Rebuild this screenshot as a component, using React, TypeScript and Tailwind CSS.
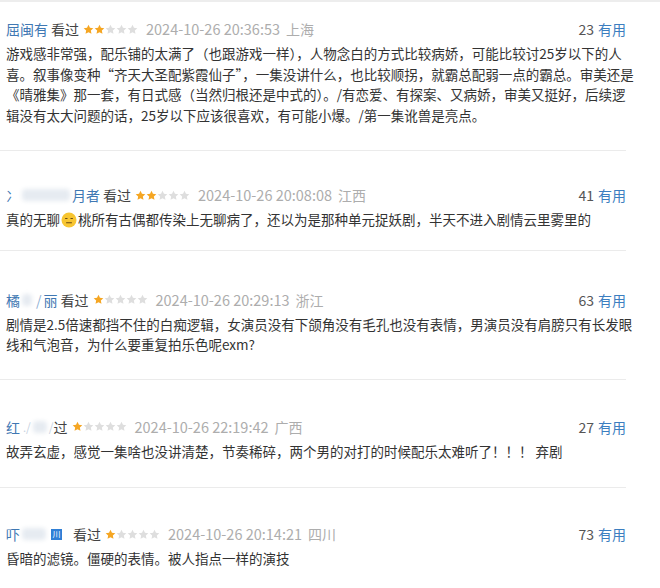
import React from "react";

type Review = {
  name: React.ReactNode;
  watchedLabel?: boolean;
  stars: number;
  date: string;
  place: string;
  votes: number;
  lines: React.ReactNode[];
  pt: string;
  pb: string;
};

const Star = ({ on }: { on: boolean }) => (
  <svg width="11" height="11" viewBox="0 0 24 24" className="shrink-0">
    <path
      d="M12 1.5l3.2 6.7 7.3.9-5.4 5 1.4 7.3L12 17.8l-6.5 3.6 1.4-7.3-5.4-5 7.3-.9z"
      fill={on ? "#f5a623" : "#dedede"}
    />
  </svg>
);

const Smudge = ({ w }: { w: number }) => (
  <span
    className="inline-block h-[12px] rounded-sm bg-[#e6ebf1] blur-[2px] mx-[2px] align-middle"
    style={{ width: w }}
  />
);

const Meh = () => (
  <svg width="16" height="16" viewBox="0 0 16 16" className="inline-block align-[-3px] mx-[1px]">
    <circle cx="8" cy="8" r="7.5" fill="#f7c531" />
    <rect x="4" y="6" width="2.6" height="1.1" rx="0.5" fill="#6b4a12" />
    <rect x="9.4" y="6" width="2.6" height="1.1" rx="0.5" fill="#6b4a12" />
    <rect x="5" y="10.2" width="6" height="1.1" rx="0.5" fill="#6b4a12" />
  </svg>
);

const reviews: Review[] = [
  {
    name: <span>屈闽有</span>,
    watchedLabel: true,
    stars: 2,
    date: "2024-10-26 20:36:53",
    place: "上海",
    votes: 23,
    pt: "pt-[17px]",
    pb: "pb-[25px]",
    lines: [
      "游戏感非常强，配乐铺的太满了（也跟游戏一样），人物念白的方式比较病娇，可能比较讨25岁以下的人",
      "喜。叙事像变种“齐天大圣配紫霞仙子”，一集没讲什么，也比较顺拐，就霸总配弱一点的霸总。审美还是",
      "《晴雅集》那一套，有日式感（当然归根还是中式的）。/有恋爱、有探案、又病娇，审美又挺好，后续逻",
      "辑没有太大问题的话，25岁以下应该很喜欢，有可能小爆。/第一集讹兽是亮点。",
    ],
  },
  {
    name: (
      <span className="flex items-center">
        冫<Smudge w={48} />月者
      </span>
    ),
    watchedLabel: true,
    stars: 2,
    date: "2024-10-26 20:08:08",
    place: "江西",
    votes: 41,
    pt: "pt-[34px]",
    pb: "pb-[20px]",
    lines: [
      <>
        真的无聊
        <Meh />
        桃所有古偶都传染上无聊病了，还以为是那种单元捉妖剧，半天不进入剧情云里雾里的
      </>,
    ],
  },
  {
    name: (
      <span className="flex items-center">
        橘<Smudge w={10} />
        <span className="text-[#8fb0d4] mx-[2px]">/</span>
        <span>丽</span>
      </span>
    ),
    watchedLabel: true,
    stars: 1,
    date: "2024-10-26 20:29:13",
    place: "浙江",
    votes: 63,
    pt: "pt-[39px]",
    pb: "pb-[24px]",
    lines: [
      "剧情是2.5倍速都挡不住的白痴逻辑，女演员没有下颌角没有毛孔也没有表情，男演员没有肩膀只有长发眼",
      "线和气泡音，为什么要重复拍乐色呢exm?",
    ],
  },
  {
    name: (
      <span className="flex items-center">
        红
        <span className="ml-[3px] text-[11px] text-[#c8d3df]">.</span>
        <span className="text-[12px] text-[#c8d3df]">/</span>
        <Smudge w={14} />
        <span className="text-[12px] text-[#c8d3df]">/</span>
        <span className="text-[#444]">过</span>
      </span>
    ),
    watchedLabel: false,
    stars: 1,
    date: "2024-10-26 22:19:42",
    place: "广西",
    votes: 27,
    pt: "pt-[37px]",
    pb: "pb-[26px]",
    lines: ["故弄玄虚，感觉一集啥也没讲清楚，节奏稀碎，两个男的对打的时候配乐太难听了！！！ 弃剧"],
  },
  {
    name: (
      <span className="flex items-center">
        吓<Smudge w={24} />
        <span className="ml-[3px] inline-flex h-[11px] w-[11px] items-center justify-center bg-[#2f7fd6] text-[8px] leading-none text-white">
          川
        </span>
        <span className="w-[8px]" />
      </span>
    ),
    watchedLabel: true,
    stars: 1,
    date: "2024-10-26 20:14:21",
    place: "四川",
    votes: 73,
    pt: "pt-[36px]",
    pb: "pb-[20px]",
    lines: ["昏暗的滤镜。僵硬的表情。被人指点一样的演技"],
  },
];

export default function App() {
  return (
    <div
      className="w-[660px] h-[588px] overflow-hidden bg-white border-t-2 border-[#ededed]"
      style={{ fontFamily: '"Noto Sans CJK SC", "Noto Sans", sans-serif' }}
    >
      <div className="w-[626px]">
        {reviews.map((r, i) => (
          <div
            key={i}
            className={`${r.pt} ${r.pb} pl-[6px] ${i < reviews.length - 1 ? "border-b border-[#ebebeb]" : ""}`}
          >
            <div className="flex items-center justify-between h-[20px] text-[14px] leading-[20px]">
              <div className="flex items-center">
                <span className="text-[#3f78b3]">{r.name}</span>
                {r.watchedLabel && <span className="ml-[3px] text-[#444]">看过</span>}
                <span className="ml-[4px] flex gap-[0px]">
                  {[0, 1, 2, 3, 4].map((s) => (
                    <Star key={s} on={s < r.stars} />
                  ))}
                </span>
                <span className="ml-[8px] text-[14.5px] text-[#adadad]">{r.date}</span>
                <span className="ml-[6px] text-[#adadad]">{r.place}</span>
              </div>
              <div className="flex items-center">
                <span className="text-[#555]">{r.votes}</span>
                <span className="ml-[4px] text-[#3c7ec0]">有用</span>
              </div>
            </div>
            <div className="mt-[4px] text-[13.5px] leading-[20.5px] text-[#333] whitespace-nowrap">
              {r.lines.map((l, j) => (
                <div key={j}>{l}</div>
              ))}
            </div>
          </div>
        ))}
      </div>
    </div>
  );
}
